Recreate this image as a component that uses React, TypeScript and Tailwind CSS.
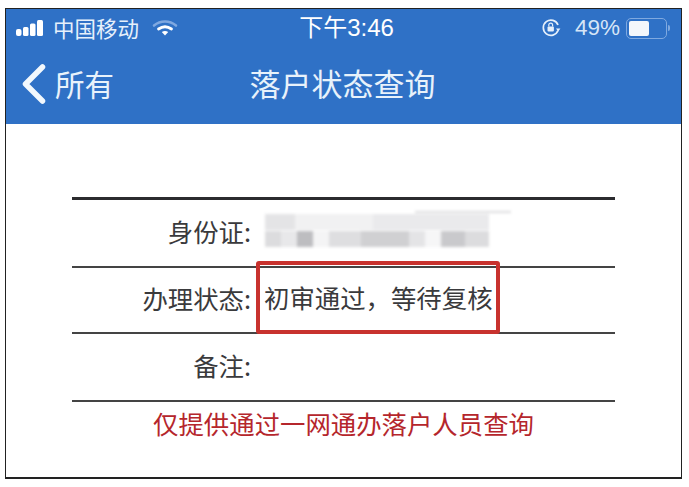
const cjk = "font-['Noto_Sans_CJK_SC','Liberation_Sans',sans-serif]";

const Signal = () => (
  <svg width="32" height="18" viewBox="0 0 32 18" className="mr-[5px]">
    <rect x="0" y="10" width="5.5" height="7" rx="2" fill="#fff" />
    <rect x="7" y="8" width="5.5" height="9" rx="1.5" fill="#fff" />
    <rect x="14" y="4.5" width="5.5" height="12.5" rx="1.5" fill="#fff" />
    <rect x="21" y="1" width="6" height="16" rx="1.5" fill="#fff" />
  </svg>
);

const Wifi = () => (
  <svg width="26" height="18" viewBox="0 0 26 18">
    <path d="M2 6.5C8.5 1.2 17.5 1.2 24 6.5" fill="none" stroke="#7fa8e0" strokeWidth="2.6" strokeLinecap="round" />
    <path d="M6.5 10C10.5 7.2 15.5 7.2 19.5 10" fill="none" stroke="#fff" strokeWidth="2.8" strokeLinecap="round" />
    <path d="M13 16.5L9.8 13C11.8 11.8 14.2 11.8 16.2 13Z" fill="#fff" />
  </svg>
);

const RotationLock = () => (
  <svg width="20" height="20" viewBox="0 0 20 20">
    <path d="M17 12.5A7.6 7.6 0 1 1 17 7" fill="none" stroke="#e6f0fb" strokeWidth="1.7" />
    <path d="M15 10.5h4.4l-2.2 3z" fill="#e6f0fb" />
    <rect x="6.5" y="8.5" width="6.4" height="5" rx="1" fill="#e6f0fb" />
    <path d="M7.8 8.5V7a1.9 1.9 0 0 1 3.8 0v1.5" fill="none" stroke="#e6f0fb" strokeWidth="1.2" />
  </svg>
);

const Battery = () => (
  <div className="flex items-center">
    <div className="w-[41px] h-[21px] rounded-[5px] border border-[#7fa9e0] p-[2px]">
      <div className="w-[20px] h-full rounded-[2px] bg-[#f4f7fb]" />
    </div>
    <div className="w-[2px] h-[6px] ml-[1px] rounded-r-sm bg-[#7fa9e0]" />
  </div>
);

const Back = () => (
  <svg width="28" height="42" viewBox="0 0 28 42">
    <path d="M23.5 4L6.5 21l17 17" fill="none" stroke="#f2f8fd" strokeWidth="5.5" strokeLinecap="round" strokeLinejoin="round" />
  </svg>
);

const Blurred = () => (
  <div className="relative flex flex-col w-[226px] h-[33px] mb-[3px] blur-[1.5px]">
    <div className="absolute left-[150px] -top-[3px] w-[96px] h-[2px] bg-[#dcdcde]" />
    <div className="flex h-[16px]">
      <div className="w-[30px] bg-[#e4e4e6]" />
      <div className="w-[78px] bg-[#f1f1f2]" />
      <div className="w-[116px] bg-[#eaeaec]" />
    </div>
    <div className="flex h-[16px] mt-[1px]">
      <div className="w-[16px] bg-[#dcdcde]" />
      <div className="w-[16px] bg-[#e8e8ea]" />
      <div className="w-[16px] bg-[#bdbdc0]" />
      <div className="w-[16px] bg-[#f4f4f5]" />
      <div className="w-[32px] bg-[#dedee0]" />
      <div className="w-[48px] bg-[#d0d0d2]" />
      <div className="w-[16px] bg-[#e4e4e6]" />
      <div className="w-[16px] bg-[#f6f6f7]" />
      <div className="w-[24px] bg-[#c9c9cc]" />
      <div className="w-[24px] bg-[#dcdcde]" />
    </div>
  </div>
);

const Row = ({ label, height, children }: { label: string; height: string; children?: React.ReactNode }) => (
  <div className={`flex items-center border-b-2 border-[#444] pb-[3px] ${height}`}>
    <div className="w-[179px] text-right text-[#3a3a3c]">{label}</div>
    <div className="ml-[14px] text-[#3a3a3c]">{children}</div>
  </div>
);

export default function App() {
  return (
    <div className={`w-[689px] h-[487px] bg-white pt-[8px] pl-[5px] ${cjk}`}>
      <div className="flex flex-col w-[677px] h-[471px] border border-[#222] border-b-2">
        <div className="h-[115px] bg-[#2f71c6] text-white">
          <div className="flex items-center justify-between h-[38px] pl-[10px] pr-[11px]">
            <div className="flex items-center w-[240px] text-[21.5px] text-[#e6f0fb]">
              <Signal />
              <span className="mr-[13px] leading-none">中国移动</span>
              <Wifi />
            </div>
            <div className="ml-[7px] text-[24px] leading-none font-['Liberation_Sans','Noto_Sans_CJK_SC',sans-serif]">下午3:46</div>
            <div className="flex items-center justify-end w-[240px] text-[22.5px] leading-none text-[#d6e5f7] font-['Liberation_Sans',sans-serif]">
              <RotationLock />
              <span className="ml-[14px] mr-[6px]">49%</span>
              <Battery />
            </div>
          </div>
          <div className="relative flex items-center justify-center h-[77px] pb-[6px] text-[31px] text-[#e8f2fb]">
            <div className="absolute left-[13px] top-[16px] flex items-center">
              <Back />
              <span className="ml-[8px] text-[29.5px] leading-none">所有</span>
            </div>
            <span className="leading-none -ml-[2px]">落户状态查询</span>
          </div>
        </div>

        <div className="flex flex-col flex-1 pt-[73px] px-[66px] text-[25.4px] leading-none">
          <div className="relative border-t-[3px] border-[#2b2b2e]">
            <Row label="身份证:" height="h-[68px]">
              <Blurred />
            </Row>
            <Row label="办理状态:" height="h-[66px]">
              <span className="block -ml-[1px] -mt-[2px]">初审通过，等待复核</span>
            </Row>
            <Row label="备注:" height="h-[68px]" />
            <div className="absolute left-[184px] top-[61px] w-[244px] h-[73px] rounded-[3px] border-[4px] border-[#c8322e]" />
          </div>
          <div className="mt-[9px] text-center text-[#b5262c]">仅提供通过一网通办落户人员查询</div>
        </div>
      </div>
    </div>
  );
}
